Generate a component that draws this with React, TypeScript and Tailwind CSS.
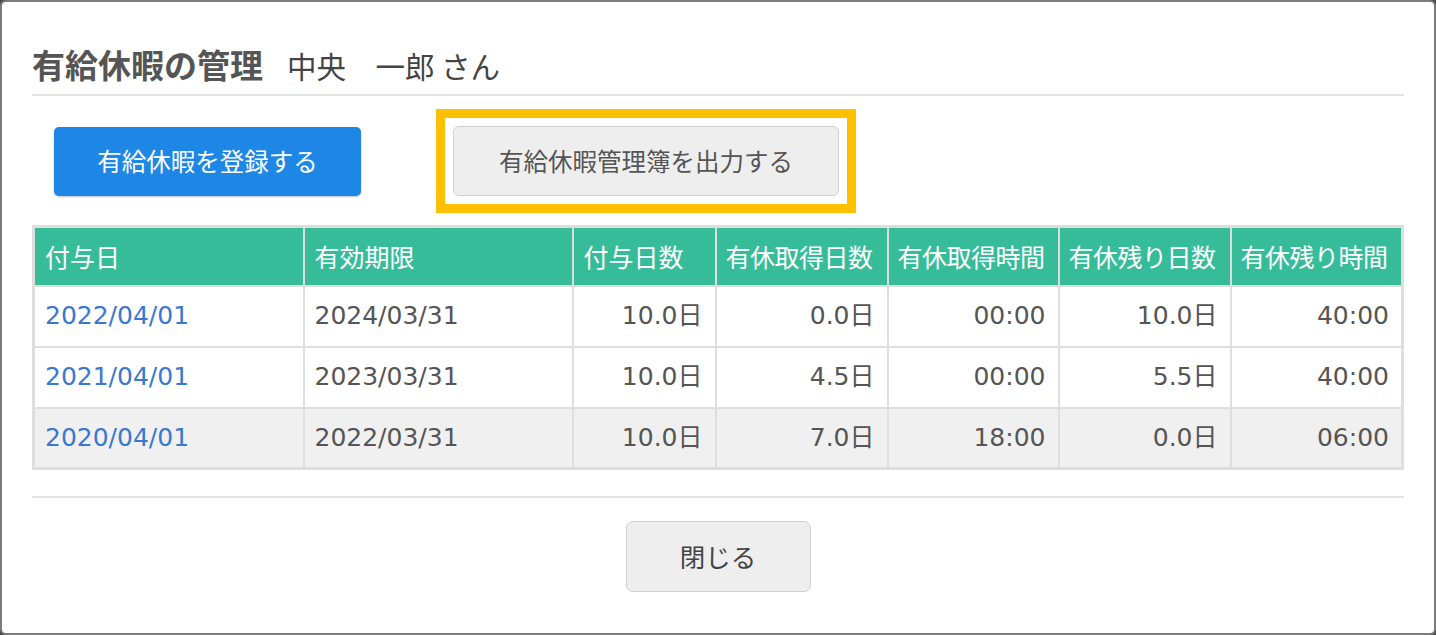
import React from 'react';

interface LeaveRow {
    grantDate: string;
    expiry: string;
    granted: string;
    takenDays: string;
    takenHours: string;
    remainDays: string;
    remainHours: string;
}

const rows: LeaveRow[] = [
    { grantDate: '2022/04/01', expiry: '2024/03/31', granted: '10.0日', takenDays: '0.0日', takenHours: '00:00', remainDays: '10.0日', remainHours: '40:00' },
    { grantDate: '2021/04/01', expiry: '2023/03/31', granted: '10.0日', takenDays: '4.5日', takenHours: '00:00', remainDays: '5.5日', remainHours: '40:00' },
    { grantDate: '2020/04/01', expiry: '2022/03/31', granted: '10.0日', takenDays: '7.0日', takenHours: '18:00', remainDays: '0.0日', remainHours: '06:00' },
];

const headers = ['付与日', '有効期限', '付与日数', '有休取得日数', '有休取得時間', '有休残り日数', '有休残り時間'];

const font = { fontFamily: '"DejaVu Sans", "Noto Sans CJK JP", sans-serif' };
const jp = { fontFamily: '"Noto Sans CJK JP", sans-serif' };

const App = () => {
    return (
        <div className="h-[635px] w-full bg-[#4a4a4a]" style={font}>
            <div className="flex h-full flex-col rounded-[6px] border-2 border-[#7c7c7c] bg-white px-[30px]">

                {/* TITLE */}
                <div className="flex items-baseline gap-[24px] border-b-2 border-[#e3e3e3] pt-[39px] pb-[6px]">
                    <h1 className="text-[33px] leading-[46px] font-bold text-[#555]" style={jp}>
                        有給休暇の管理
                    </h1>
                    <span className="text-[29.5px] leading-[46px] text-[#444]" style={jp}>
                        中央　一郎 さん
                    </span>
                </div>

                {/* ACTIONS */}
                <div className="mt-[13px] flex items-center">
                    <button className="ml-[22px] h-[69px] w-[307px] rounded-[5px] bg-[#1e87e5] text-[24.5px] text-white shadow-[0_1px_2px_rgba(0,0,0,0.25)]" style={jp}>
                        有給休暇を登録する
                    </button>
                    <div className="ml-[75px] border-[9px] border-[#ffc000] p-[8px]">
                        <button className="h-[70px] w-[386px] rounded-[6px] border border-[#cfcfcf] bg-[#eeeeee] text-[24.5px] text-[#555]" style={jp}>
                            有給休暇管理簿を出力する
                        </button>
                    </div>
                </div>

                {/* TABLE */}
                <table className="mt-[12px] w-full table-fixed border-collapse border-[3px] border-[#dedede] text-[25px] text-[#555]">
                    <colgroup>
                        <col className="w-[270px]" />
                        <col className="w-[269px]" />
                        <col className="w-[143px]" />
                        <col className="w-[172px]" />
                        <col className="w-[171px]" />
                        <col className="w-[172px]" />
                        <col />
                    </colgroup>
                    <thead>
                        <tr className="h-[59px] bg-[#37bc9a] text-white">
                            {headers.map((h, i) => (
                                <th
                                    key={h}
                                    className={`border-x-2 border-[#dedede] text-left font-normal whitespace-nowrap ${i >= 3 ? 'px-[9px] tracking-[-0.5px]' : 'px-[10px]'}`}
                                    style={jp}
                                >
                                    {h}
                                </th>
                            ))}
                        </tr>
                    </thead>
                    <tbody>
                        {rows.map((r, idx) => (
                            <tr key={r.grantDate} className={idx === 2 ? 'h-[61px] bg-[#f0f0f0]' : 'h-[61px] bg-white'}>
                                <td className="border-2 border-[#dedede] px-[10px] text-[#3a78d2]">{r.grantDate}</td>
                                <td className="border-2 border-[#dedede] px-[10px]">{r.expiry}</td>
                                <td className="border-2 border-[#dedede] px-[12px] text-right">{r.granted}</td>
                                <td className="border-2 border-[#dedede] px-[12px] text-right">{r.takenDays}</td>
                                <td className="border-2 border-[#dedede] px-[12px] text-right">{r.takenHours}</td>
                                <td className="border-2 border-[#dedede] px-[12px] text-right">{r.remainDays}</td>
                                <td className="border-2 border-[#dedede] px-[12px] text-right">{r.remainHours}</td>
                            </tr>
                        ))}
                    </tbody>
                </table>

                {/* FOOTER */}
                <div className="mt-[26px] flex justify-center border-t-2 border-[#e3e3e3] pt-[23px]">
                    <button className="h-[71px] w-[185px] rounded-[7px] border border-[#cfcfcf] bg-[#eeeeee] text-[25.5px] text-[#444]" style={jp}>
                        閉じる
                    </button>
                </div>
            </div>
        </div>
    );
};

export default App;
